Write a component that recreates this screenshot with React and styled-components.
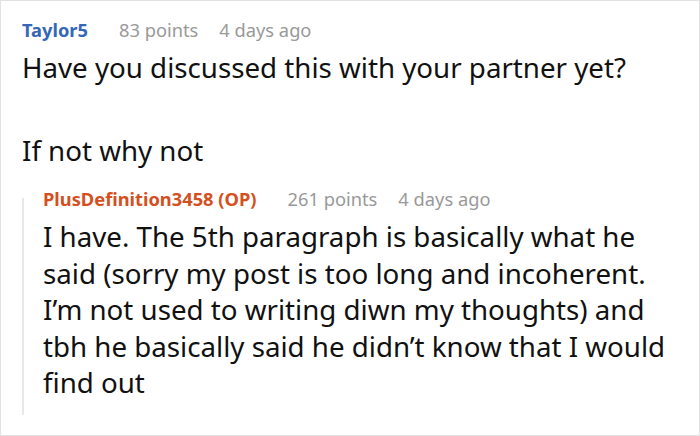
import React from 'react';
import styled, { createGlobalStyle } from 'styled-components';

const GlobalStyle = createGlobalStyle`
  html, body {
    margin: 0;
    padding: 0;
    background: #ffffff;
  }
  * {
    box-sizing: border-box;
  }
`;

const Frame = styled.div`
  width: 700px;
  height: 436px;
  border: 1px solid #e2e2e2;
  background: #ffffff;
  padding: 17px 0 0 21px;
  font-family: 'Noto Sans', 'Open Sans', sans-serif;
  color: #111111;
  overflow: hidden;
`;

const Comment = styled.div`
  display: flex;
  flex-direction: column;
`;

const Meta = styled.div`
  display: flex;
  align-items: baseline;
  font-size: 18.3px;
  line-height: 24px;
  margin-bottom: 7px;
  white-space: nowrap;
`;

const Author = styled.span`
  font-weight: 700;
  color: ${(p) => (p.$op ? '#d4501e' : '#3468b7')};
  margin-right: 31px;
`;

const Stat = styled.span`
  color: #999999;
  margin-right: 21px;
`;

const Body = styled.div`
  font-size: 27.7px;
  line-height: 36.5px;
`;

const Para = styled.p`
  margin: 0;
  & + & {
    margin-top: 46.5px;
  }
`;

const ReplyRow = styled.div`
  display: flex;
  margin-top: 18.5px;
`;

const ThreadLine = styled.div`
  flex: 0 0 2px;
  margin-top: 11px;
  margin-right: 19px;
  background: #e8e8e8;
`;

const ReplyBody = styled.div`
  flex: 1;
  padding-bottom: 14px;
  padding-right: 23px;
`;

export default function App() {
  return (
    <>
      <GlobalStyle />
      <Frame>
        <Comment>
          <Meta>
            <Author>Taylor5</Author>
            <Stat>83 points</Stat>
            <Stat>4 days ago</Stat>
          </Meta>
          <Body>
            <Para>Have you discussed this with your partner yet?</Para>
            <Para>If not why not</Para>
          </Body>
        </Comment>
        <ReplyRow>
          <ThreadLine />
          <ReplyBody>
            <Meta>
              <Author $op>PlusDefinition3458 (OP)</Author>
              <Stat>261 points</Stat>
              <Stat>4 days ago</Stat>
            </Meta>
            <Body>
              <Para>
                I have. The 5th paragraph is basically what he said (sorry my
                post is too long and incoherent. I’m not used to writing diwn my
                thoughts) and tbh he basically said he didn’t know that I would
                find out
              </Para>
            </Body>
          </ReplyBody>
        </ReplyRow>
      </Frame>
    </>
  );
}
